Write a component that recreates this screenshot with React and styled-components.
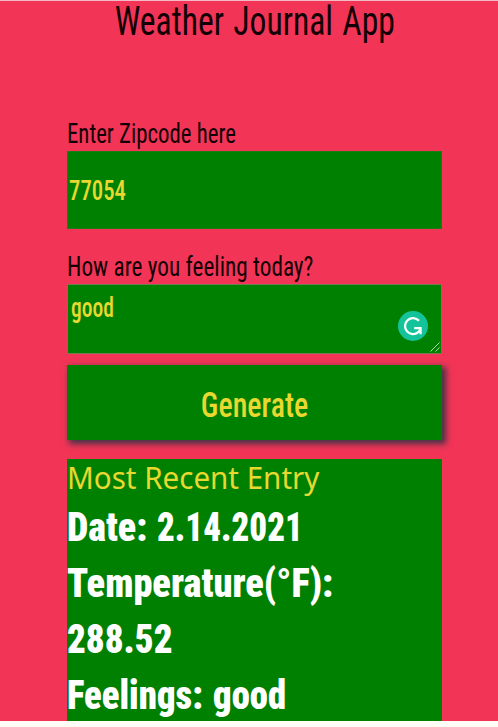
import React from "react";
import styled, { createGlobalStyle } from "styled-components";

const GlobalStyle = createGlobalStyle`
  * { box-sizing: border-box; }
  body { margin: 0; background: #fffdf6; }
`;

const Page = styled.div`
  height: 721px;
  border-top: 1px solid #f3b9c4;
  background: #f23557;
  color: #120004;
  font-family: Roboto, "Open Sans", sans-serif;
  font-stretch: 75%;
`;

const Condensed = styled.span`
  display: inline-block;
  white-space: nowrap;
  word-spacing: ${(p) => p.$gap || 0}px;
  transform: scaleX(${(p) => p.$x});
  transform-origin: ${(p) => p.$origin || "left"} center;
`;

const Title = styled.h1`
  margin: 0 0 74px;
  padding-left: 12px;
  font-size: 41px;
  font-weight: 400;
  line-height: 41px;
  height: 42px;
  text-align: center;
`;

const Form = styled.main`
  width: 375px;
  margin-left: 67px;
  display: flex;
  flex-direction: column;
`;

const Label = styled.label`
  height: ${(p) => p.$height}px;
  font-size: 28px;
  line-height: ${(p) => p.$line}px;
`;

const ZipField = styled.div`
  height: 78px;
  margin-bottom: 19px;
  padding: 2px 0 0 2px;
  background: #008000;
  box-shadow: inset 0 0 0 1px #1f7a12;
  color: #e8d82f;
  font-size: 28.5px;
  font-weight: 500;
  line-height: 76px;
`;

const FeelingsField = styled.div`
  position: relative;
  height: 70px;
  margin-bottom: 11px;
  padding: 6px 0 0 3px;
  border: 1px solid #767a52;
  background: #008000;
  color: #e8d82f;
  font-size: 28px;
  font-weight: 500;
  line-height: 34px;
`;

const Badge = styled.svg`
  position: absolute;
  right: 13px;
  top: 26px;
  width: 30px;
  height: 30px;
`;

const ResizeGrip = styled.svg`
  position: absolute;
  right: 1px;
  bottom: 1px;
  width: 10px;
  height: 10px;
`;

const GenerateButton = styled.button`
  height: 75px;
  margin: 0 0 19px;
  padding: 5px 0 0;
  border: 0;
  background: #008000;
  box-shadow: 3px 3px 6px 1px rgba(50, 50, 70, 0.9);
  color: #e8d82f;
  font: inherit;
  font-size: 35.5px;
  font-weight: 500;
  line-height: 70px;
`;

const Entry = styled.section`
  height: 262px;
  background: #008000;
`;

const EntryTitle = styled.div`
  height: 40px;
  color: #e8d82f;
  font-family: "Noto Sans", sans-serif;
  font-stretch: 100%;
  font-size: 30px;
  line-height: 38px;
`;

const EntryLine = styled.div`
  height: 56px;
  display: flex;
  gap: ${(p) => p.$gap || 0}px;
  color: #fff;
  font-size: 41px;
  font-weight: 900;
  line-height: 56px;
`;

export default function App() {
  return (
    <>
      <GlobalStyle />
      <Page>
        <Title>
          <Condensed $x={0.82} $gap={2} $origin="center">Weather Journal App</Condensed>
        </Title>
        <Form>
          <Label $height={34} $line={34}>
            <Condensed $x={0.815}>Enter Zipcode here</Condensed>
          </Label>
          <ZipField>
            <Condensed $x={0.8}>77054</Condensed>
          </ZipField>
          <Label $height={36} $line={37}>
            <Condensed $x={0.83}>How are you feeling today?</Condensed>
          </Label>
          <FeelingsField>
            <Condensed $x={0.77}>good</Condensed>
            <Badge viewBox="0 0 30 30" fill="none">
              <circle cx="15" cy="15" r="15" fill="#15c39a" />
              <path
                d="M21 9.8A8 8 0 1 0 20.2 21.2L22 19M16.2 17.2H22.6V23.2"
                stroke="#fff"
                strokeWidth="2.2"
              />
            </Badge>
            <ResizeGrip viewBox="0 0 10 10" stroke="#c4dfc4" strokeWidth="0.9">
              <path d="M0.5 9.5L9.5 0.5M5.5 9.5L9.5 5.5" />
            </ResizeGrip>
          </FeelingsField>
          <GenerateButton>
            <Condensed $x={0.845} $origin="center">Generate</Condensed>
          </GenerateButton>
          <Entry>
            <EntryTitle>
              <Condensed $x={0.985}>Most Recent Entry</Condensed>
            </EntryTitle>
            <EntryLine $gap={3}>
              <Condensed $x={0.925}>Date:</Condensed>
              <Condensed $x={0.85}>2.14.2021</Condensed>
            </EntryLine>
            <EntryLine>
              <Condensed $x={0.935}>Temperature(°F):</Condensed>
            </EntryLine>
            <EntryLine>
              <Condensed $x={0.9}>288.52</Condensed>
            </EntryLine>
            <EntryLine>
              <Condensed $x={0.895} $gap={2}>Feelings: good</Condensed>
            </EntryLine>
          </Entry>
        </Form>
      </Page>
    </>
  );
}
